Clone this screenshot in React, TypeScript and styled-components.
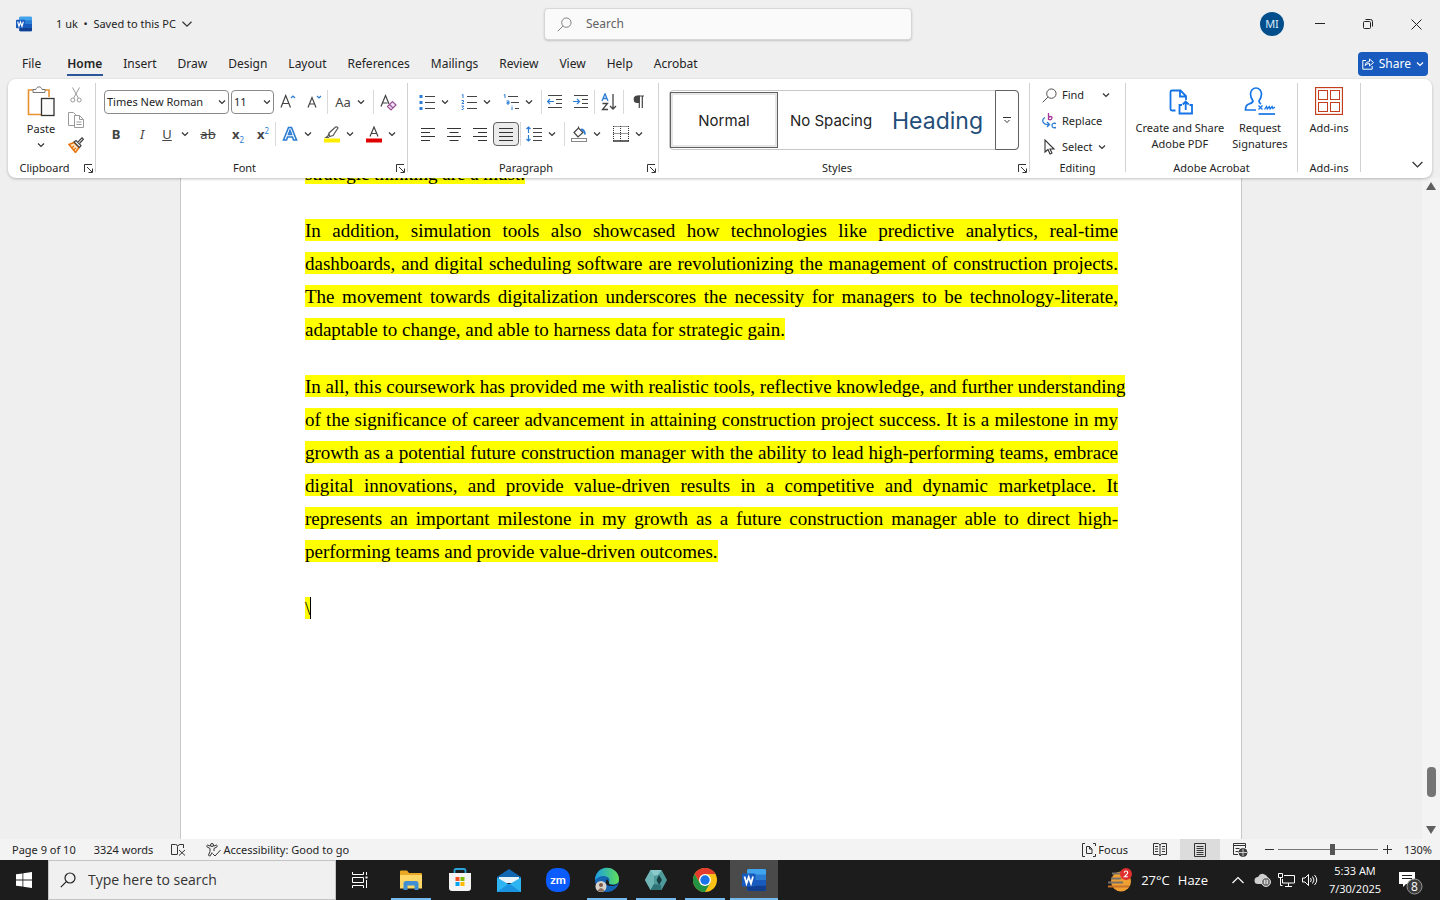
import React from "react";
import styled, { createGlobalStyle, css } from "styled-components";

const Global = createGlobalStyle`
  *, *::before, *::after { box-sizing: border-box; }
  html, body { margin: 0; height: 100%; }
  #root { height: 100%; }
  body { background: #efefef; color: #242424; font: 11px/16px "Noto Sans", "Open Sans", sans-serif; overflow: hidden; }
  button, input, select { font: inherit; color: inherit; }
  button { border: 0; padding: 0; background: none; cursor: default; }
  svg { display: block; flex: none; }
`;

const Shell = styled.div`
  display: flex;
  flex-direction: column;
  height: 100vh;
`;

/* ---------- title bar ---------- */

const TitleBar = styled.header`
  display: grid;
  grid-template-columns: 1fr minmax(0, 368px) 1fr;
  align-items: center;
  height: 48px;
  flex: none;
  padding-left: 16px;
`;

const DocName = styled.div`
  display: flex;
  align-items: center;
  gap: 24px;
`;

const NameButton = styled.button`
  display: flex;
  align-items: center;
  gap: 5px;
  white-space: pre;
`;

const SearchBox = styled.label`
  display: flex;
  align-items: center;
  gap: 14px;
  height: 32px;
  padding: 0 12px;
  background: #fafafa;
  border: 1px solid #d6d6d6;
  border-radius: 4px;
  box-shadow: 0 1px 2px rgba(0, 0, 0, 0.18);
  color: #616161;
  font-size: 12px;
`;

const TextInput = styled.input`
  flex: 1;
  min-width: 0;
  height: 24px;
  border: 0;
  padding: 0;
  outline: 0;
  background: none;
  line-height: 24px;
  &::placeholder { color: inherit; opacity: 1; }
`;

const WindowControls = styled.div`
  display: flex;
  justify-content: flex-end;
  align-items: center;
`;

const Avatar = styled.button`
  width: 24px;
  height: 24px;
  margin-right: 12px;
  border-radius: 50%;
  background: #004e8c;
  color: #dcecf8;
`;

const WindowButton = styled.button`
  display: grid;
  place-items: center;
  width: 48px;
  height: 48px;
`;

/* ---------- tabs ---------- */

const TabRow = styled.nav`
  display: flex;
  align-items: center;
  height: 31px;
  flex: none;
  padding: 0 12px 0 12px;
  font-size: 12px;
`;

const Tab = styled.button<{ $active?: boolean; $first?: boolean }>`
  position: relative;
  height: 30px;
  padding: 0 11px 0 10px;
  margin-right: ${(p) => (p.$first ? 5 : 0)}px;
  font-weight: ${(p) => (p.$active ? 600 : 400)};
  ${(p) =>
    p.$active &&
    css`
      &::after {
        content: "";
        position: absolute;
        left: 10px;
        right: 10px;
        bottom: 3px;
        height: 2px;
        background: #2b579a;
      }
    `}
`;

const ShareButton = styled.button`
  display: flex;
  align-items: center;
  gap: 5px;
  height: 24px;
  margin-left: auto;
  padding: 0 4px;
  border-radius: 4px;
  background: #185abd;
  color: #fff;
`;

/* ---------- ribbon ---------- */

const RibbonPanel = styled.section`
  position: relative;
  z-index: 1;
  display: flex;
  flex: none;
  height: 99px;
  margin: 0 8px;
  padding: 4px 0 0;
  background: #fff;
  border-radius: 8px;
  box-shadow: 0 1px 3px rgba(0, 0, 0, 0.25);
`;

const GroupBox = styled.div<{ $w: number }>`
  display: flex;
  flex-direction: column;
  flex: none;
  width: ${(p) => p.$w}px;
  height: 89px;
  border-right: 1px solid #d1d1d1;
`;

const GroupBody = styled.div<{ $row?: boolean }>`
  display: flex;
  flex-direction: ${(p) => (p.$row ? "row" : "column")};
  flex: 1;
  min-height: 0;
`;

const GroupFooter = styled.div`
  display: flex;
  align-items: center;
  height: 8px;
  line-height: 8px;
  text-align: center;
`;

const Launcher = styled.button`
  display: grid;
  place-items: center;
  width: 14px;
  height: 8px;
`;

const GroupTitle = styled.span`
  flex: 1;
`;

const ToolRow = styled.div`
  display: flex;
  align-items: center;
  height: 32px;
  padding-left: 7px;
`;

const ToolLines = styled.div`
  display: flex;
  flex-direction: column;
  padding-top: 3px;
`;

const Tool = styled.button<{ $on?: boolean; $w?: number }>`
  display: grid;
  place-items: center;
  flex: none;
  width: ${(p) => p.$w ?? 26}px;
  height: 24px;
  border-radius: 4px;
  ${(p) =>
    p.$on &&
    css`
      background: #ebebeb;
      border: 1px solid #616161;
    `}
`;

const SplitTool = styled.button`
  display: grid;
  grid-template-columns: 24px 8px;
  gap: 2px;
  align-items: center;
  justify-items: center;
  flex: none;
  height: 24px;
  margin-right: 8px;
`;

const Divider = styled.span<{ $l?: number; $r?: number }>`
  flex: none;
  width: 1px;
  height: 24px;
  margin: 0 ${(p) => p.$r ?? 0}px 0 ${(p) => p.$l ?? 0}px;
  background: #d9d9d9;
`;

const Combo = styled.label<{ $w: number }>`
  display: grid;
  align-items: center;
  width: ${(p) => p.$w}px;
  height: 24px;
  margin-left: 1px;
  margin-right: 1px;
  border: 1px solid #8a8a8a;
  border-radius: 4px;
  select {
    grid-area: 1 / 1;
    appearance: none;
    width: 100%;
    height: 22px;
    padding: 0 0 0 2px;
    border: 0;
    outline: 0;
    background: none;
  }
  svg {
    grid-area: 1 / 1;
    justify-self: end;
    margin-right: 2px;
    pointer-events: none;
  }
`;

const PasteButton = styled.button`
  display: flex;
  flex-direction: column;
  align-items: center;
  gap: 4px;
  width: 58px;
  padding: 3px 0 0 8px;
`;

const SideTools = styled.div`
  display: flex;
  flex-direction: column;
  gap: 1px;
`;

const Glyph = styled.span<{ $bold?: boolean; $italic?: boolean; $line?: string }>`
  font-size: 13px;
  font-weight: ${(p) => (p.$bold ? 700 : 400)};
  font-style: ${(p) => (p.$italic ? "italic" : "normal")};
  text-decoration: ${(p) => p.$line ?? "none"};
  color: #444;
  white-space: nowrap;
  sub, sup { font-size: 8px; font-weight: 400; line-height: 0; color: #2b7cd3; }
`;

const Gallery = styled.div`
  display: grid;
  grid-template-columns: 108px 106px 1fr 23px;
  height: 60px;
  margin: 7px 10px 0;
  border: 1px solid #c8c8c8;
  border-radius: 4px;
  font: 15px/20px Inter, "Open Sans", sans-serif;
`;

const StyleCard = styled.button<{ $selected?: boolean; $heading?: boolean }>`
  overflow: hidden;
  padding-top: 2px;
  ${(p) =>
    p.$selected &&
    css`
      margin: 1px 0;
      border: 1px solid #616161;
      box-shadow: inset 0 0 0 2px #e6e6e6;
    `}
  ${(p) =>
    p.$heading &&
    css`
      padding-right: 4px;
      color: #1f4e79;
      font-size: 23px;
      line-height: 28px;
    `}
`;

const MoreStyles = styled.button`
  display: grid;
  place-items: center;
  margin: -1px -1px -1px 0;
  border: 1px solid #616161;
  border-radius: 0 4px 4px 0;
`;

const EditTool = styled.button`
  display: flex;
  align-items: center;
  height: 26px;
  padding-left: 12px;
  gap: 5px;
`;

const EditList = styled.div`
  display: flex;
  flex-direction: column;
  margin-top: -1px;
`;

const FindGap = styled.span`
  width: 8px;
`;

const BigTools = styled.div`
  display: flex;
  flex: 1;
  justify-content: center;
  align-items: flex-start;
  gap: 8px;
  padding-top: 4px;
`;

const BigTool = styled.button`
  display: flex;
  flex-direction: column;
  align-items: center;
  gap: 5px;
  white-space: pre-line;
`;

const Collapse = styled.button`
  align-self: flex-end;
  display: grid;
  place-items: center;
  width: 30px;
  height: 28px;
  margin-left: auto;
`;

/* ---------- document ---------- */

const Workspace = styled.main`
  display: flex;
  flex: 1;
  min-height: 0;
`;

const Canvas = styled.div`
  display: flex;
  justify-content: center;
  flex: 1;
  min-width: 0;
  overflow: hidden;
`;

const Sheet = styled.article`
  width: 1062px;
  max-width: 100%;
  padding: 0 123px 0 124px;
  background: #fff;
  border: solid #c8c8c8;
  border-width: 0 1px;
  color: #000;
  font: 19px/33px "Liberation Serif", "Times New Roman", serif;
`;

const Flow = styled.div`
  margin-top: -21px;
`;

const Paragraph = styled.p`
  margin: 0 0 24px;
`;

const Line = styled.span<{ $end?: boolean }>`
  display: block;
  white-space: nowrap;
  text-align: justify;
  text-align-last: ${(p) => (p.$end ? "left" : "justify")};
`;

const Highlight = styled.mark<{ $caret?: boolean }>`
  padding-top: 1px;
  background: #ff0;
  color: inherit;
  border-right: ${(p) => (p.$caret ? "1px solid #000" : "0")};
`;

const ScrollTrack = styled.div`
  display: flex;
  flex-direction: column;
  align-items: center;
  width: 18px;
  padding: 4px 0 5px;
  background: #f3f3f3;
`;

const ScrollSpace = styled.span<{ $grow: number }>`
  flex: ${(p) => p.$grow} 1 0;
`;

const Thumb = styled.span`
  width: 9px;
  height: 30px;
  border-radius: 4px;
  background: #757575;
`;

/* ---------- status bar ---------- */

const StatusBar = styled.footer`
  display: flex;
  align-items: center;
  flex: none;
  height: 21px;
  padding: 0 8px 0 12px;
  background: #f3f3f3;
`;

const StatusItem = styled.button<{ $gap?: number }>`
  display: flex;
  align-items: center;
  gap: 2px;
  margin-right: ${(p) => p.$gap ?? 18}px;
`;

const ViewButton = styled.button<{ $on?: boolean }>`
  display: grid;
  place-items: center;
  width: 40px;
  height: 21px;
  background: ${(p) => (p.$on ? "#dcdcdc" : "none")};
`;

const ZoomStep = styled.button`
  display: grid;
  place-items: center;
  width: 18px;
  height: 20px;
`;

const ZoomSlider = styled.input`
  appearance: none;
  width: 100px;
  height: 12px;
  margin: 0;
  background: linear-gradient(#777, #777) center / 100% 1px no-repeat;
  &::-webkit-slider-thumb {
    appearance: none;
    width: 5px;
    height: 11px;
    background: #555;
  }
`;

const ZoomValue = styled.button`
  width: 36px;
  text-align: right;
`;

const Spacer = styled.span`
  flex: 1;
`;

/* ---------- taskbar ---------- */

const Taskbar = styled.footer`
  display: flex;
  flex: none;
  height: 40px;
  background: #1c1c1c;
  color: #fff;
  font-family: "Open Sans", "Noto Sans", sans-serif;
`;

const TaskSearch = styled.label`
  display: flex;
  align-items: center;
  gap: 12px;
  width: 288px;
  padding: 0 11px;
  border: 1px solid #c4c4c4;
  background: #f0f0f0;
  color: #333;
  font-size: 14px;
`;

const Apps = styled.div`
  display: flex;
  gap: 1px;
  margin-left: 3px;
`;

const TaskButton = styled.button<{ $open?: boolean; $active?: boolean }>`
  position: relative;
  display: grid;
  place-items: center;
  width: 48px;
  height: 40px;
  background: ${(p) => (p.$active ? "#4a4a4a" : "none")};
  ${(p) =>
    (p.$open || p.$active) &&
    css`
      &::after {
        content: "";
        position: absolute;
        left: ${p.$active ? 0 : 4}px;
        right: ${p.$active ? 0 : 4}px;
        bottom: 0;
        height: 2px;
        background: #76b9ed;
      }
    `}
`;

const Weather = styled.button`
  display: flex;
  align-items: center;
  gap: 8px;
  margin: 0 18px 0 auto;
  font-size: 13px;
`;

const TrayButton = styled.button`
  display: grid;
  place-items: center;
  width: 24px;
`;

const Clock = styled.button`
  width: 66px;
  line-height: 18px;
  text-align: center;
`;

const Notices = styled.button`
  display: grid;
  place-items: center;
  width: 52px;
  padding: 6px 6px 0 0;
`;

/* ---------- icons ---------- */

const Chev = ({ s = 8, c = "#333" }: { s?: number; c?: string }) => (
  <svg width={s} height={s} viewBox="0 0 8 8" fill="none" stroke={c} strokeWidth={s > 8 ? 0.8 : 1.2}>
    <path d="M1 2.5 4 5.5 7 2.5" />
  </svg>
);

const Lens = ({ s, c, w = 1 }: { s: number; c: string; w?: number }) => (
  <svg width={s} height={s} viewBox="0 0 16 16" fill="none" stroke={c} strokeWidth={w}>
    <circle cx="10" cy="6" r="5" />
    <path d="M6.3 9.7 0.8 15.2" />
  </svg>
);

const WordIcon = ({ s }: { s: number }) => (
  <svg width={s} height={s} viewBox="0 0 24 24">
    <rect x="5" y="1" width="19" height="22" rx="1.5" fill="#2b7cd3" />
    <path d="M5 2.5A1.5 1.5 0 0 1 6.500 1h16A1.5 1.5 0 0 1 24 2.500V6.500H5z" fill="#41a5ee" />
    <path d="M5 12h19v5.500H5z" fill="#185abd" />
    <path d="M5 17.500h19v4a1.500 1.500 0 0 1-1.500 1.500h-16A1.500 1.500 0 0 1 5 21.500z" fill="#103f91" />
    <rect x="0" y="5.500" width="13.500" height="13" rx="1.2" fill="#185abd" />
    <path d="M2.500 8.500 4.500 15.500 6.700 9 9 15.500 11 8.500" fill="none" stroke="#fff" strokeWidth="1.800" />
  </svg>
);

const LauncherIcon = () => (
  <svg width="9" height="9" viewBox="0 0 9 9" fill="none" stroke="#333">
    <path d="M.5 8V.5H8M3 3l5 5M8.500 4.500v4h-4" />
  </svg>
);

const PasteIcon = () => (
  <svg width="28" height="31" viewBox="0 0 28 31" fill="none">
    <path d="M8 4H1.500V28.500H14M18 4h4v7" stroke="#e8912d" strokeWidth="1.600" />
    <path d="M6 6.500V3.500h3C9.500 0 14.500 0 15 3.500h3v3z" fill="#fff" stroke="#777" />
    <rect x="14.500" y="12.500" width="12.500" height="17" fill="#fafafa" stroke="#333" strokeWidth="1.300" />
  </svg>
);

const CutIcon = () => (
  <svg width="12" height="16" viewBox="0 0 12 16" fill="none" stroke="#9a9a9a">
    <path d="M2.500.5 8.300 11M9.500.5 3.700 11" />
    <circle cx="2.800" cy="13" r="2" />
    <circle cx="9.200" cy="13" r="2" />
  </svg>
);

const CopyIcon = () => (
  <svg width="16" height="16" viewBox="0 0 16 16" fill="none" stroke="#9a9a9a">
    <path d="M6 13.500H.5V.5h5L8 3" />
    <path d="M6.500 3.500h5l4 4v8h-9zM11.500 3.500v4h4M8.500 10h5M8.500 12.500h5" />
  </svg>
);

const PainterIcon = () => (
  <svg width="16" height="16" viewBox="0 0 16 16" fill="none">
    <path d="M1 7.500 6 5.500 11 10.500 7.500 15.500z" fill="#fbe3c4" stroke="#e8730c" strokeWidth="1.500" />
    <path d="M3.500 11 6 9M5.500 13 8 11" stroke="#e8730c" strokeWidth="1.200" />
    <path d="M6 5 8 3.500l5 5L11.500 10.500z" fill="#fff" stroke="#444" strokeWidth="1.200" />
    <path d="M10 5 14 .8l1.400 1.400L11.500 6.500" fill="#fff" stroke="#444" strokeWidth="1.200" />
  </svg>
);

const SizeIcon = ({ up }: { up?: boolean }) => (
  <svg width="16" height="16" viewBox="0 0 16 16" fill="none" stroke="#444" strokeWidth="1.200">
    {up ? <path d="M1 13.500 5.700 1.500 10.500 13.500M2.500 9.500H9" /> : <path d="M2 13.500 6 3.500 10 13.500M3.300 10H8.700" />}
    {up ? <path d="M11 4 13 2 15 4" stroke="#2b7cd3" /> : <path d="M11 2 13 4 15 2" stroke="#2b7cd3" />}
  </svg>
);

const ClearIcon = () => (
  <svg width="17" height="17" viewBox="0 0 17 17" fill="none" stroke="#444" strokeWidth="1.200">
    <path d="M1 12.500 5.500 1.500 9 10M2.500 9H7.500" />
    <path d="M7.500 12.500 12.500 7.500 16 11 11 16zM9.500 10.500 13 14" fill="#f1e3f5" stroke="#9b4f96" />
  </svg>
);

const EffectIcon = () => (
  <svg width="16" height="16" viewBox="0 0 16 16" fill="none">
    <path d="M1.500 14 6.500 1.500h3l5 12.500h-3L10.500 11h-5L4.500 14zM6.500 8.500h3L8 4.500z" fill="#fff" stroke="#2b7cd3" strokeWidth="1.600" />
  </svg>
);

const PenIcon = () => (
  <svg width="16" height="17" viewBox="0 0 16 17" fill="none" stroke="#555">
    <path d="M5 7 11.500 1q2-.5 2.500 1L9 9.500 5.500 10.500zM5 7l-1 3-2 1.500h3" strokeWidth="1.200" />
    <path d="M0 14.500h16" stroke="#ffed00" strokeWidth="4" />
  </svg>
);

const ColorIcon = () => (
  <svg width="16" height="17" viewBox="0 0 16 17" fill="none" stroke="#444" strokeWidth="1.200">
    <path d="M4 10.500 8 1 12 10.500M5.300 7.500h5.400" />
    <path d="M0 14.500h16" stroke="#e00000" strokeWidth="4" />
  </svg>
);

const ListIcon = ({ kind }: { kind: "dot" | "num" | "multi" }) => (
  <svg width="16" height="16" viewBox="0 0 16 16" fill="none" stroke="#444">
    {kind === "dot" && (
      <>
        <path d="M6 2.500h10M6 8.500h10M6 14.500h10" />
        <path d="M.5 2.500h3M.5 8.500h3M.5 14.500h3" stroke="#2b7cd3" strokeWidth="3" />
      </>
    )}
    {kind === "num" && (
      <>
        <path d="M6 2.500h10M6 8.500h10M6 14.500h10" />
        <path d="M.8 1 2 .5V4M.5 6.500h2v1.500L.8 9.500H3M.5 12h2.200L1.500 13.500 2.700 14.500 2 15.500H.5" stroke="#2b7cd3" />
      </>
    )}
    {kind === "multi" && (
      <>
        <path d="M5 2.500h10M8 8.500h8M12 14.500h4" />
        <path d="M.8 1 2 .5V4M3.500 7h2.500v3H4V8.500h2M9 11.500v.8M9 13v3" stroke="#2b7cd3" />
      </>
    )}
  </svg>
);

const IndentIcon = ({ inc }: { inc?: boolean }) => (
  <svg width="16" height="14" viewBox="0 0 16 14" fill="none" stroke="#444">
    <path d="M1 .5h14M9 4.500h6M9 8.500h6M1 12.500h14" />
    <path d={inc ? "M0 6.500h6M4 4 6.500 6.500 4 9" : "M7 6.500H1M3 4 .5 6.500 3 9"} stroke="#2b7cd3" strokeWidth="1.200" />
  </svg>
);

const SortIcon = () => (
  <svg width="16" height="18" viewBox="0 0 16 18" fill="none" strokeWidth="1.300">
    <path d="M1 8 4 .8 7 8M2 5.500h4" stroke="#2b7cd3" />
    <path d="M1.500 10.500H6.500L1.500 16.500H7" stroke="#444" />
    <path d="M12 1V16M9 13l3 3 3-3" stroke="#444" />
  </svg>
);

const PilcrowIcon = () => (
  <svg width="12" height="14" viewBox="0 0 12 14" fill="none" stroke="#444" strokeWidth="1.200">
    <path d="M6 1H4.500a3 3 0 0 0 0 6.500H6z" fill="#444" />
    <path d="M5 1h6M6.300 1v12M9.300 1v12" />
  </svg>
);

const AlignIcon = ({ kind }: { kind: "left" | "center" | "right" | "full" }) => {
  const d = {
    left: "M1 1.500h14M1 5.500h9M1 9.500h14M1 13.500h9",
    center: "M1 1.500h14M3.500 5.500h9M1 9.500h14M3.500 13.500h9",
    right: "M1 1.500h14M6 5.500h9M1 9.500h14M6 13.500h9",
    full: "M1 1.500h14M1 5.500h14M1 9.500h14M1 13.500h14",
  }[kind];
  return (
    <svg width="16" height="15" viewBox="0 0 16 15" fill="none" stroke="#333">
      <path d={d} />
    </svg>
  );
};

const SpacingIcon = () => (
  <svg width="16" height="16" viewBox="0 0 16 16" fill="none" stroke="#444">
    <path d="M7 2.500h9M7 6.500h9M7 10.500h9M7 14.500h9" />
    <path d="M2.500 1v6M.5 3 2.500 1 4.500 3M2.500 9v6M.5 13l2 2 2-2" stroke="#2b7cd3" strokeWidth="1.200" />
  </svg>
);

const BucketIcon = () => (
  <svg width="16" height="16" viewBox="0 0 16 16" fill="none" stroke="#444">
    <path d="M3 6.500 7.500 2 12 6.500 7 11zM7.500 2V.5" strokeWidth="1.200" />
    <path d="M10 3.500q3.500 0 4 5" stroke="#2b7cd3" strokeWidth="1.800" />
    <rect x=".5" y="12.500" width="15" height="3" stroke="#888" />
  </svg>
);

const BorderIcon = () => (
  <svg width="16" height="16" viewBox="0 0 16 16" fill="none" stroke="#333">
    <path d="M.5.500h15M.5 7.500h15M.5 0v15M7.500 0v15M15.500 0v15" strokeDasharray="1 1" />
    <path d="M0 15h16" strokeWidth="1.500" />
  </svg>
);

const ReplaceIcon = () => (
  <svg width="15" height="16" viewBox="0 0 15 16" fill="none" strokeWidth="1.300">
    <path d="M6.500 0v7M6.500 4.500q2-2 3.500 0 0 3-3.500 2" stroke="#a4379a" />
    <path d="M14 10.500q-4-1-4 2t4 2" stroke="#2b7cd3" />
    <path d="M3 4.500Q0 6 1 9q1.500 3 6 2.500M5 9l2.500 2.500L5 14" stroke="#2b7cd3" />
  </svg>
);

const CursorIcon = () => (
  <svg width="15" height="16" viewBox="0 0 15 16" fill="none" stroke="#333" strokeWidth="1.100">
    <path d="M3 1v12l3-2.500L8 15l2-1-2-4h4z" />
  </svg>
);

const PdfIcon = () => (
  <svg width="26" height="28" viewBox="0 0 26 28" fill="none" stroke="#1473e6" strokeWidth="1.800">
    <path d="M8.500 23.500H5A1.500 1.500 0 0 1 3.500 22V5A1.500 1.500 0 0 1 5 3.500h8.500L19 9v4M13 4v5.500h5.500" />
    <path d="M15 18h-2.500v8.500H25V18h-2.500M18.700 23v-8M15.700 17.500l3-3 3 3" />
  </svg>
);

const SignIcon = () => (
  <svg width="32" height="28" viewBox="0 0 32 28" fill="none" stroke="#1473e6" strokeWidth="1.700">
    <path d="M12 23H1.500q0-5 3.500-6t4-3Q6.500 10.500 6.500 7a5.500 6 0 0 1 11 0Q17.500 10.500 15 14q0 2 2 3" />
    <path d="M14.500 18.500l4 4M18.500 18.500l-4 4M20.500 22.500l2-3 .8 2.500 2-2.500.8 2.500 2-2.500.8 2 2-1.500" strokeWidth="1.300" />
    <path d="M14.500 27H31" />
  </svg>
);

const AddinsIcon = () => (
  <svg width="28" height="28" viewBox="0 0 28 28" fill="none" stroke="#c43e1c">
    <rect x=".5" y=".5" width="27" height="27" strokeWidth="1.300" />
    <rect x="3.500" y="3.500" width="9" height="9" />
    <rect x="15.500" y="3.500" width="9" height="9" />
    <rect x="3.500" y="15.500" width="9" height="9" />
    <rect x="15.500" y="15.500" width="9" height="9" />
  </svg>
);

const ShareIcon = () => (
  <svg width="12" height="12" viewBox="0 0 12 12" fill="none" stroke="#fff">
    <path d="M4 2.500H.8v8.700h9.400V8" />
    <path d="M3 7.500q.5-4 4.500-4V1L11.500 4.500 7.500 8V5.500Q4.500 5.500 3 7.500z" />
  </svg>
);

const ProofIcon = () => (
  <svg width="15" height="13" viewBox="0 0 15 13" fill="none" stroke="#333">
    <path d="M6 11.500H.5v-10h4q2 0 2 2v8M7 3q.5-1.500 2-1.500h3.500V5M8 7l6 5.500M14 7l-6 5.500" />
  </svg>
);

const AccessIcon = () => (
  <svg width="15" height="14" viewBox="0 0 15 14" fill="none" stroke="#333">
    <circle cx="6" cy="2" r="1.500" />
    <path d="M4.500 3.200 1.500 2Q.3 2.500 1 3.800L4 5.500v3L2.500 12q.5 1.500 1.800.8L6 9.500M7.500 3.200l3-1.200q1.200.5.500 1.800L8 5.500V8M6.500 10.500l2.500 2.500L14.500 7" />
  </svg>
);

const FocusIcon = () => (
  <svg width="14" height="14" viewBox="0 0 14 14" fill="none" stroke="#333">
    <path d="M3 .5H.5v13H3M11 .5h2.500V3M11 13.500h2.500V11M4.500 3.500h3L10 6v4.500H4.500zM7.500 3.500V6H10" />
  </svg>
);

const ReadIcon = () => (
  <svg width="14" height="13" viewBox="0 0 14 13" fill="none" stroke="#333">
    <path d="M.5.500h5L7 2 8.500.500h5v11h-5L7 13 5.500 11.500h-5zM7 2v10M2 3.500h3M2 6h3M2 8.500h3M9 3.500h3M9 6h3M9 8.500h3" />
  </svg>
);

const PrintIcon = () => (
  <svg width="12" height="14" viewBox="0 0 12 14" fill="none" stroke="#333">
    <path d="M.5.500h11v13H.5zM2.500 3.500h7M2.500 5.500h7M2.500 7.500h7M2.500 9.500h7M2.500 11.500h7" />
  </svg>
);

const WebIcon = () => (
  <svg width="15" height="14" viewBox="0 0 15 14" fill="none" stroke="#333">
    <path d="M5 11.500H.5V.500h12V5M.5 2.500h12M2.500 5.500h4M2.500 8.500h3" />
    <circle cx="10" cy="9.500" r="4" fill="#444" />
    <path d="M6 9.500h8M10 5.500v8" stroke="#ccc" />
  </svg>
);

const StartIcon = () => (
  <svg width="16" height="16" viewBox="0 0 16 16" fill="#fff">
    <path d="M0 2.300 6.500 1.400V7.600H0zM7.300 1.300 16 0V7.600H7.300zM0 8.400H6.500V14.600L0 13.700zM7.300 8.400H16V16L7.300 14.700z" />
  </svg>
);

const TaskViewIcon = () => (
  <svg width="16" height="16" viewBox="0 0 16 16" fill="none" stroke="#fff">
    <path d="M.5 0v2.500h11V0M.5 5.500h11v5H.5zM.5 16v-2.500h11V16M14.500 0v3M14.500 8v8" />
    <path d="M13.500 5.500h2" strokeWidth="2" />
  </svg>
);

const FolderIcon = () => (
  <svg width="22" height="20" viewBox="0 0 22 20">
    <path d="M0 1.500Q0 .5 1 .5h6l2 2.500h12q1 0 1 1V18H0z" fill="#e8a824" />
    <path d="M0 5h22v13.500H0z" fill="#ffd767" />
    <path d="M3.500 20v-6.500q0-2.500 2.500-2.500h10q2.500 0 2.500 2.500V20h-4v-4.500h-7V20z" fill="#3f8fd2" />
  </svg>
);

const StoreIcon = () => (
  <svg width="24" height="24" viewBox="0 0 24 24">
    <path d="M6.500 6V2.500Q6.500 1 8 1h8q1.500 0 1.500 1.500V6" fill="none" stroke="#2aa3d8" strokeWidth="1.800" />
    <path d="M1 5h22v15q0 3-3 3H4q-3 0-3-3z" fill="#f4f4f4" />
    <path d="M7.500 9h4v4h-4z" fill="#f25022" />
    <path d="M12.500 9h4v4h-4z" fill="#7fba00" />
    <path d="M7.500 14h4v4h-4z" fill="#00a4ef" />
    <path d="M12.500 14h4v4h-4z" fill="#ffb900" />
  </svg>
);

const MailIcon = () => (
  <svg width="24" height="23" viewBox="0 0 24 23">
    <path d="M0 8 12 0l12 8v6H0z" fill="#1066b0" />
    <path d="M2 8h20v6H2z" fill="#e9f3fb" />
    <path d="M0 8.500 12 15.500 24 8.500V23H0z" fill="#2fb4f2" />
    <path d="M0 23 12 14.500 24 23z" fill="#1a94e0" />
  </svg>
);

const ZoomDisc = styled.span`
  display: grid;
  place-items: center;
  width: 24px;
  height: 24px;
  border-radius: 10px;
  background: #0b5cff;
  font: 700 12px/16px Lato, sans-serif;
`;

const EdgeIcon = () => (
  <svg width="26" height="26" viewBox="0 0 26 26">
    <defs>
      <linearGradient id="edge" x1="0" x2="1" y1="0.200" y2="0.200">
        <stop offset="0" stopColor="#1b9de2" />
        <stop offset="1" stopColor="#5fe05a" />
      </linearGradient>
    </defs>
    <circle cx="13" cy="13" r="12" fill="#1464b4" />
    <path d="M1 13A12 12 0 0 1 25 12.500Q25 17.500 19 17.500 14 17.500 15 15 16.500 12 13.500 10 7 7 1 13z" fill="url(#edge)" />
    <path d="M15 15q-1 3 4 3 3 0 5-2-1 2-3 2.500-7 1.500-9-1.500Q11 14 13 12z" fill="#1c1c1c" />
    <circle cx="7" cy="19.500" r="5.500" fill="#d9d2cc" />
    <circle cx="7" cy="18" r="2" fill="#7b5a48" />
    <path d="M3.500 23.500q3.500-5 7 0-3.500 2.500-7 0z" fill="#8a6f60" />
  </svg>
);

const HexIcon = () => (
  <svg width="22" height="20" viewBox="0 0 22 20">
    <path d="M5.500 0h11L22 10 16.500 20h-11L0 10z" fill="#4f9b9c" />
    <path d="M5.500 0h11L13 5 8 6z" fill="#8bcaca" />
    <path d="M0 10 5.500 0 9 6v8L5.500 20z" fill="#6fb5b6" />
    <path d="M5.500 20 9 14l7 1 .5 5z" fill="#2f7376" />
    <path d="M14 5 17 10l-3 5L11.500 10z" fill="#173c42" />
  </svg>
);

const ChromeIcon = () => (
  <svg width="24" height="24" viewBox="0 0 24 24">
    <circle cx="12" cy="12" r="12" fill="#fbc116" />
    <path d="M12 6H22.400A12 12 0 0 0 1.600 6L7 15 12 12z" fill="#e33b2e" />
    <path d="M1.600 6A12 12 0 0 0 12 24L17.200 15 12 17.500 6.800 15z" fill="#229342" />
    <circle cx="12" cy="12" r="6" fill="#fff" />
    <circle cx="12" cy="12" r="4.700" fill="#1a73e8" />
  </svg>
);

const HazeIcon = () => (
  <svg width="26" height="24" viewBox="0 0 26 24">
    <circle cx="14" cy="13.500" r="10" fill="#f0a032" />
    <path d="M5 5.500h12M4 10.500h10M1 14.500h15" stroke="#77716c" strokeWidth="2" />
    <path d="M1 18.500h21" stroke="#c7732a" strokeWidth="2" />
    <circle cx="19" cy="6" r="6" fill="#e02f2f" />
    <path d="M17.300 4.800Q17.300 3 19 3t1.700 1.600Q20.700 6 17.300 8.800h3.600" fill="none" stroke="#fff" strokeWidth="1.100" />
  </svg>
);

const CloudIcon = () => (
  <svg width="17" height="14" viewBox="0 0 17 14">
    <path d="M4 11a3.500 3.500 0 0 1 0-7Q6 0 9.500 1T14 5v6z" fill="#cfcfcf" />
    <circle cx="12" cy="9" r="4.500" fill="#777" stroke="#ddd" />
    <path d="M10.800 7v4M13.200 7v4" stroke="#fff" />
  </svg>
);

const NetIcon = () => (
  <svg width="17" height="15" viewBox="0 0 17 15" fill="none" stroke="#fff">
    <path d="M6 2.500h10.500v7.500H4.500V6M7 13.500h7M10.500 10v3.500M.5.500h4v4h-4zM2.500 4.500v8h2" />
  </svg>
);

const VolumeIcon = () => (
  <svg width="17" height="14" viewBox="0 0 17 14" fill="none" stroke="#fff">
    <path d="M.5 5H3l3.500-3.500v11L3 9H.5zM8.500 5q1.500 2 0 4M10.500 3.500q3 3.500 0 7M12.500 2q4.500 5 0 10" />
  </svg>
);

const NoticeIcon = () => (
  <svg width="24" height="24" viewBox="0 0 24 24">
    <path d="M0 1h16v12H7l-3 3v-3H0z" fill="#fff" />
    <path d="M3 4.500h10M3 7.500h10" stroke="#1c1c1c" />
    <circle cx="15.500" cy="15.500" r="7.500" fill="#3a3a3a" stroke="#999" />
    <text x="15.500" y="19.500" fill="#fff" fontSize="12" textAnchor="middle">8</text>
  </svg>
);

/* ---------- page ---------- */

const Group = ({ title, w, row, launcher, children }: { title: string; w: number; row?: boolean; launcher?: boolean; children: React.ReactNode }) => (
  <GroupBox $w={w} role="group" aria-label={title}>
    <GroupBody $row={row}>{children}</GroupBody>
    <GroupFooter>
      <GroupTitle>{title}</GroupTitle>
      {launcher && (
        <Launcher aria-label={`${title} settings`}>
          <LauncherIcon />
        </Launcher>
      )}
    </GroupFooter>
  </GroupBox>
);

const Split = ({ label, children }: { label: string; children: React.ReactNode }) => (
  <SplitTool aria-label={label}>
    {children}
    <Chev />
  </SplitTool>
);

const tabs = ["File", "Home", "Insert", "Draw", "Design", "Layout", "References", "Mailings", "Review", "View", "Help", "Acrobat"];

const paragraphs = [
  ["strategic thinking are a must."],
  [
    "In addition, simulation tools also showcased how technologies like predictive analytics, real-time",
    "dashboards, and digital scheduling software are revolutionizing the management of construction projects.",
    "The movement towards digitalization underscores the necessity for managers to be technology-literate,",
    "adaptable to change, and able to harness data for strategic gain.",
  ],
  [
    "In all, this coursework has provided me with realistic tools, reflective knowledge, and further understanding",
    "of the significance of career advancement in attaining construction project success. It is a milestone in my",
    "growth as a potential future construction manager with the ability to lead high-performing teams, embrace",
    "digital innovations, and provide value-driven results in a competitive and dynamic marketplace. It",
    "represents an important milestone in my growth as a future construction manager able to direct high-",
    "performing teams and provide value-driven outcomes.",
  ],
  ["\\"],
];

const Ribbon = () => (
  <RibbonPanel>
    <Group title="Clipboard" w={88} row launcher>
      <PasteButton>
        <PasteIcon />
        Paste
        <Chev />
      </PasteButton>
      <SideTools>
        <Tool $w={20} aria-label="Cut"><CutIcon /></Tool>
        <Tool $w={20} aria-label="Copy"><CopyIcon /></Tool>
        <Tool $w={20} aria-label="Format painter"><PainterIcon /></Tool>
      </SideTools>
    </Group>

    <Group title="Font" w={312} launcher>
      <ToolLines>
        <ToolRow>
          <Combo $w={125}>
            <select aria-label="Font">
              <option>Times New Roman</option>
            </select>
            <Chev />
          </Combo>
          <Combo $w={43}>
            <select aria-label="Font size">
              <option>11</option>
            </select>
            <Chev />
          </Combo>
          <Tool aria-label="Grow font"><SizeIcon up /></Tool>
          <Tool aria-label="Shrink font"><SizeIcon /></Tool>
          <Divider $r={3} />
          <Split label="Change case"><Glyph>Aa</Glyph></Split>
          <Divider $r={1} />
          <Tool aria-label="Clear formatting"><ClearIcon /></Tool>
        </ToolRow>
        <ToolRow>
          <Tool aria-label="Bold"><Glyph $bold>B</Glyph></Tool>
          <Tool aria-label="Italic"><Glyph $italic>I</Glyph></Tool>
          <Tool $w={24} aria-label="Underline"><Glyph $line="underline">U</Glyph></Tool>
          <Tool $w={12} aria-label="Underline styles"><Chev /></Tool>
          <Tool $w={34} aria-label="Strikethrough"><Glyph $line="line-through">ab</Glyph></Tool>
          <Tool aria-label="Subscript"><Glyph $bold>x<sub>2</sub></Glyph></Tool>
          <Tool $w={24} aria-label="Superscript"><Glyph $bold>x<sup>2</sup></Glyph></Tool>
          <Divider $r={2} />
          <Split label="Text effects"><EffectIcon /></Split>
          <Split label="Highlight color"><PenIcon /></Split>
          <Split label="Font color"><ColorIcon /></Split>
        </ToolRow>
      </ToolLines>
    </Group>

    <Group title="Paragraph" w={251} launcher>
      <ToolLines>
        <ToolRow>
          <Split label="Bullets"><ListIcon kind="dot" /></Split>
          <Split label="Numbering"><ListIcon kind="num" /></Split>
          <Split label="Multilevel list"><ListIcon kind="multi" /></Split>
          <Divider />
          <Tool aria-label="Decrease indent"><IndentIcon /></Tool>
          <Tool aria-label="Increase indent"><IndentIcon inc /></Tool>
          <Divider />
          <Tool $w={28} aria-label="Sort"><SortIcon /></Tool>
          <Divider $r={2} />
          <Tool aria-label="Show marks"><PilcrowIcon /></Tool>
        </ToolRow>
        <ToolRow>
          <Tool aria-label="Align left"><AlignIcon kind="left" /></Tool>
          <Tool aria-label="Center"><AlignIcon kind="center" /></Tool>
          <Tool aria-label="Align right"><AlignIcon kind="right" /></Tool>
          <Tool $on aria-label="Justify"><AlignIcon kind="full" /></Tool>
          <Divider $l={1} $r={1} />
          <Split label="Line spacing"><SpacingIcon /></Split>
          <Divider $r={2} />
          <Split label="Shading"><BucketIcon /></Split>
          <Split label="Borders"><BorderIcon /></Split>
        </ToolRow>
      </ToolLines>
    </Group>

    <Group title="Styles" w={371} launcher>
      <Gallery>
        <StyleCard $selected>Normal</StyleCard>
        <StyleCard>No Spacing</StyleCard>
        <StyleCard $heading>Heading</StyleCard>
        <MoreStyles aria-label="More styles">
          <svg width="8" height="8" viewBox="0 0 8 8" fill="none" stroke="#333">
            <path d="M0 1.500h8M1.500 4 4 6.500 6.500 4" />
          </svg>
        </MoreStyles>
      </Gallery>
    </Group>

    <Group title="Editing" w={96}>
      <EditList>
        <EditTool><Lens s={15} c="#444" />Find<FindGap /><Chev /></EditTool>
        <EditTool><ReplaceIcon />Replace</EditTool>
        <EditTool><CursorIcon />Select<Chev /></EditTool>
      </EditList>
    </Group>

    <Group title="Adobe Acrobat" w={172} row>
      <BigTools>
        <BigTool><PdfIcon />{"Create and Share\nAdobe PDF"}</BigTool>
        <BigTool><SignIcon />{"Request\nSignatures"}</BigTool>
      </BigTools>
    </Group>

    <Group title="Add-ins" w={63} row>
      <BigTools>
        <BigTool><AddinsIcon />Add-ins</BigTool>
      </BigTools>
    </Group>

    <Collapse aria-label="Collapse ribbon"><Chev s={13} /></Collapse>
  </RibbonPanel>
);

export default function App() {
  return (
    <Shell>
      <Global />
      <TitleBar>
        <DocName>
          <WordIcon s={16} />
          <NameButton>
            {"1 uk  •  Saved to this PC"}
            <Chev s={12} />
          </NameButton>
        </DocName>
        <SearchBox>
          <Lens s={15} c="#777" />
          <TextInput type="search" placeholder="Search" aria-label="Search" />
        </SearchBox>
        <WindowControls>
          <Avatar>MI</Avatar>
          <WindowButton aria-label="Minimize">
            <svg width="10" height="10" viewBox="0 0 10 10" stroke="#222"><path d="M0 4.500h10" /></svg>
          </WindowButton>
          <WindowButton aria-label="Restore">
            <svg width="10" height="10" viewBox="0 0 10 10" fill="none" stroke="#222">
              <rect x=".5" y="2.500" width="7" height="7" rx="1" />
              <path d="M2.500.500h5a2 2 0 0 1 2 2v5" />
            </svg>
          </WindowButton>
          <WindowButton aria-label="Close">
            <svg width="11" height="11" viewBox="0 0 11 11" stroke="#222"><path d="M.5.500l10 10M10.500.500l-10 10" /></svg>
          </WindowButton>
        </WindowControls>
      </TitleBar>

      <TabRow>
        {tabs.map((t) => (
          <Tab key={t} $first={t === "File"} $active={t === "Home"}>{t}</Tab>
        ))}
        <ShareButton>
          <ShareIcon />
          Share
          <Chev c="#fff" />
        </ShareButton>
      </TabRow>

      <Ribbon />

      <Workspace>
        <Canvas>
          <Sheet>
            <Flow>
              {paragraphs.map((lines) => (
                <Paragraph key={lines[0]}>
                  {lines.map((text, i) => (
                    <Line key={text} $end={i === lines.length - 1}>
                      <Highlight $caret={text === "\\"}>{text}</Highlight>
                    </Line>
                  ))}
                </Paragraph>
              ))}
            </Flow>
          </Sheet>
        </Canvas>
        <ScrollTrack>
          <svg width="10" height="8" viewBox="0 0 10 8" fill="#606060"><path d="M5 0 10 8H0z" /></svg>
          <ScrollSpace $grow={574} />
          <Thumb />
          <ScrollSpace $grow={29} />
          <svg width="10" height="8" viewBox="0 0 10 8" fill="#606060"><path d="M0 0h10L5 8z" /></svg>
        </ScrollTrack>
      </Workspace>

      <StatusBar>
        <StatusItem>Page 9 of 10</StatusItem>
        <StatusItem>3324 words</StatusItem>
        <StatusItem $gap={20} aria-label="Proofing"><ProofIcon /></StatusItem>
        <StatusItem><AccessIcon />Accessibility: Good to go</StatusItem>
        <Spacer />
        <StatusItem $gap={12}><FocusIcon />Focus</StatusItem>
        <ViewButton aria-label="Read mode"><ReadIcon /></ViewButton>
        <ViewButton $on aria-label="Print layout"><PrintIcon /></ViewButton>
        <ViewButton aria-label="Web layout"><WebIcon /></ViewButton>
        <ZoomStep aria-label="Zoom out">
          <svg width="9" height="9" viewBox="0 0 9 9" stroke="#333"><path d="M0 4.500h9" /></svg>
        </ZoomStep>
        <ZoomSlider type="range" min={0} max={100} defaultValue={55} aria-label="Zoom" />
        <ZoomStep aria-label="Zoom in">
          <svg width="9" height="9" viewBox="0 0 9 9" stroke="#333"><path d="M0 4.500h9M4.500 0v9" /></svg>
        </ZoomStep>
        <ZoomValue>130%</ZoomValue>
      </StatusBar>

      <Taskbar>
        <TaskButton aria-label="Start"><StartIcon /></TaskButton>
        <TaskSearch>
          <Lens s={16} c="#222" w={1.2} />
          <TextInput type="search" placeholder="Type here to search" aria-label="Type here to search" />
        </TaskSearch>
        <TaskButton aria-label="Task view"><TaskViewIcon /></TaskButton>
        <Apps>
          <TaskButton $open aria-label="File Explorer"><FolderIcon /></TaskButton>
          <TaskButton aria-label="Store"><StoreIcon /></TaskButton>
          <TaskButton aria-label="Mail"><MailIcon /></TaskButton>
          <TaskButton aria-label="Zoom"><ZoomDisc>zm</ZoomDisc></TaskButton>
          <TaskButton $open aria-label="Edge"><EdgeIcon /></TaskButton>
          <TaskButton $open aria-label="Scheduler"><HexIcon /></TaskButton>
          <TaskButton $open aria-label="Chrome"><ChromeIcon /></TaskButton>
          <TaskButton $active aria-label="Word"><WordIcon s={24} /></TaskButton>
        </Apps>
        <Weather>
          <HazeIcon />
          <span>27°C</span>
          <span>Haze</span>
        </Weather>
        <TrayButton aria-label="Hidden icons">
          <svg width="12" height="8" viewBox="0 0 12 8" fill="none" stroke="#fff" strokeWidth="1.200"><path d="M.5 7 6 1.500 11.500 7" /></svg>
        </TrayButton>
        <TrayButton aria-label="OneDrive"><CloudIcon /></TrayButton>
        <TrayButton aria-label="Network"><NetIcon /></TrayButton>
        <TrayButton aria-label="Volume"><VolumeIcon /></TrayButton>
        <Clock>5:33 AM<br />7/30/2025</Clock>
        <Notices aria-label="8 notifications"><NoticeIcon /></Notices>
      </Taskbar>
    </Shell>
  );
}
